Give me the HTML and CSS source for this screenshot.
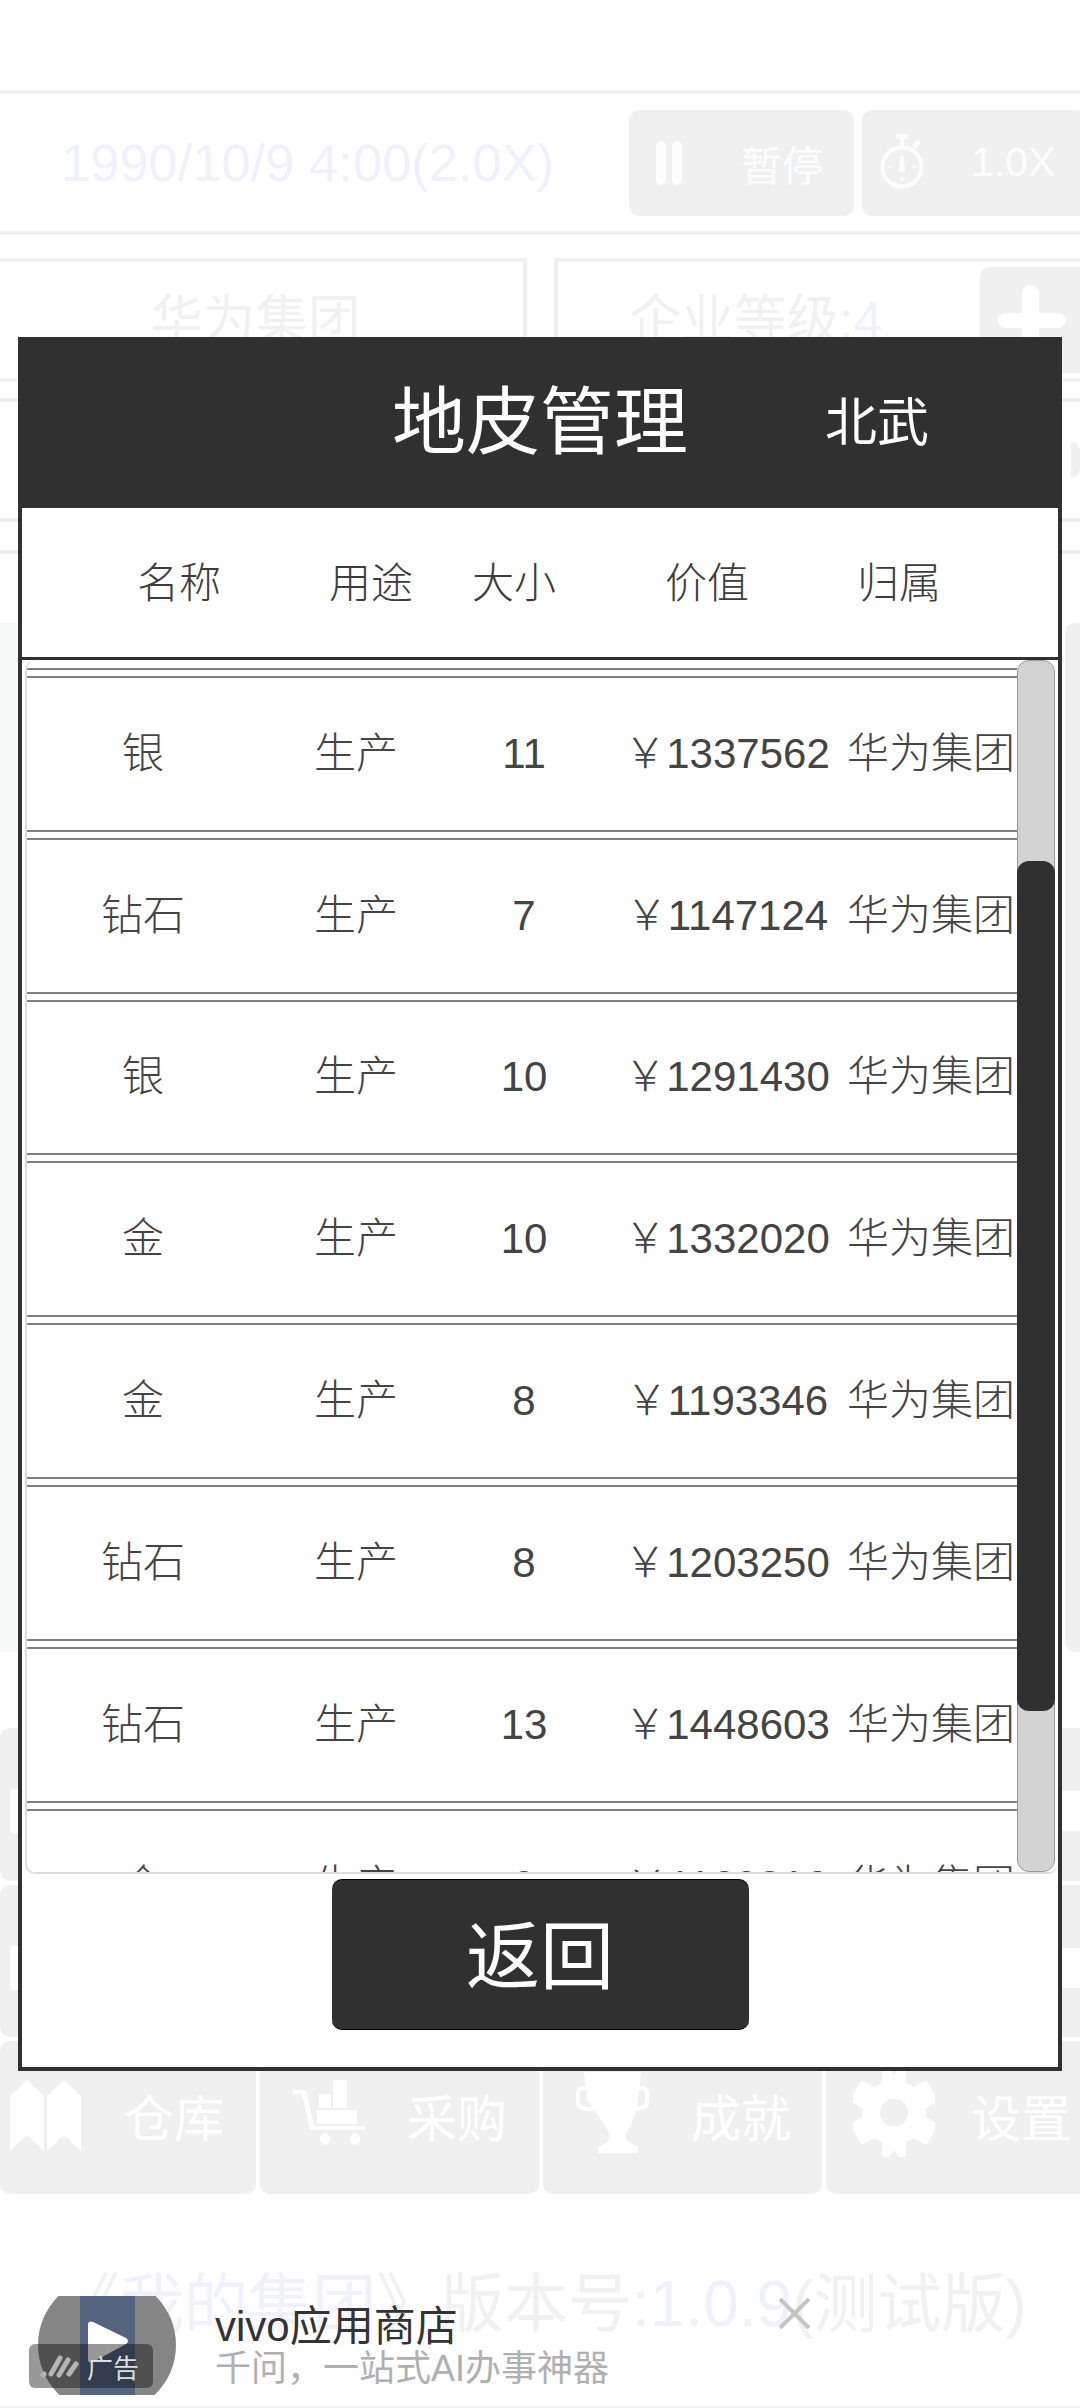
FILE: index.html
```html
<!DOCTYPE html>
<html lang="zh-CN">
<head>
    <meta charset="UTF-8">
    <meta name="viewport" content="width=device-width, initial-scale=1.0">
    <title>地皮管理</title>
    <link rel="stylesheet" href="styles.css">
</head>
<body>
    <!-- Faded game screen behind the dialog -->
    <div class="game">
        <div class="top-gap"></div>
        <div class="status-bar">
            <div class="game-time">1990/10/9 4:00(2.0X)</div>
            <div class="ctrl-btn">
                <svg class="pause-icon" viewBox="0 0 26 44"><rect width="10" height="44" rx="5"/><rect x="16" width="10" height="44" rx="5"/></svg>
                <span>暂停</span>
            </div>
            <div class="ctrl-btn">
                <svg class="watch-icon" viewBox="0 0 42 55"><rect x="15" width="12" height="5" rx="1"/><rect x="19" y="4" width="4" height="8"/><rect x="33" y="6" width="5" height="8" rx="1" transform="rotate(38 35 10)"/><circle cx="21" cy="33" r="19.500" fill="none" stroke="#fdfdfd" stroke-width="4"/><path d="M19.500 22h3l1.500 13a3 3 0 1 1-6 0z"/><circle cx="21" cy="45" r="2"/><circle cx="9" cy="33" r="1.500"/><circle cx="33" cy="33" r="1.500"/></svg>
                <span>1.0X</span>
            </div>
        </div>
        <div class="company-row">
            <div class="company-card first">华为集团</div>
            <div class="company-card second">
                <span class="level">企业等级:<em>4</em></span>
                <div class="plus-btn"><svg class="plus-icon" viewBox="0 0 69 70"><path d="M25 8a8 8 0 0 1 17 0v20h19a7.500 7.500 0 0 1 0 15H42v19a8 8 0 0 1-17 0V43H8a7.500 7.500 0 0 1 0-15h17z"/></svg></div>
            </div>
        </div>
        <div class="info-row"><span class="info-dot"></span></div>
        <div class="thin-line"></div>
        <div class="panels">
            <div class="panel-left"></div>
            <div class="panel-right"></div>
        </div>
        <div class="nav">
            <div class="nav-row">
                <div class="nav-tile"><span class="tile-mark"></span></div>
                <div class="nav-tile"></div>
                <div class="nav-tile"></div>
                <div class="nav-tile"><span class="tile-end"></span></div>
            </div>
            <div class="nav-row">
                <div class="nav-tile"><span class="tile-mark"></span></div>
                <div class="nav-tile"></div>
                <div class="nav-tile"></div>
                <div class="nav-tile"><span class="tile-end"></span></div>
            </div>
            <div class="nav-row">
                <div class="nav-tile">
                    <svg class="nav-icon map" viewBox="0 0 71 71"><path d="M0 16 L17 0 L34 16 V71 L17 55 L0 71z"/><path d="M37 16 L54 0 L71 16 V71 L54 55 L37 71z"/></svg>
                    <span>仓库</span>
                </div>
                <div class="nav-tile">
                    <svg class="nav-icon cart" viewBox="0 0 72 65"><path d="M0 10h10q3 0 4 3l7 33h51v4H17L9 14H0z"/><rect x="26" y="14" width="12" height="14"/><rect x="40" y="0" width="14" height="28"/><rect x="24" y="30" width="40" height="14"/><ellipse cx="32" cy="59" rx="5" ry="6"/><ellipse cx="62" cy="59" rx="5" ry="6"/></svg>
                    <span>采购</span>
                </div>
                <div class="nav-tile">
                    <svg class="nav-icon trophy" viewBox="0 0 73 81"><path d="M8 0h57l-3 28q-1 14-12 34q-3 7 12 13v6H22v-6q15-6 12-13Q22 42 11 28z"/><path d="M11 14H6q-6 0-6 8v8q0 9 14 9h3v-4h-3q-10 0-10-6v-7q0-4 3-4h5zM62 14h5q6 0 6 8v8q0 9-14 9h-3v-4h3q10 0 10-6v-7q0-4-3-4h-5z"/></svg>
                    <span>成就</span>
                </div>
                <div class="nav-tile">
                    <svg class="nav-icon gear" viewBox="0 0 82 89"><circle cx="41" cy="44.500" r="32"/><rect x="29" y="0" width="24" height="89" rx="3"/><rect x="29" y="0" width="24" height="89" rx="3" transform="rotate(60 41 44.500)"/><rect x="29" y="0" width="24" height="89" rx="3" transform="rotate(120 41 44.500)"/><g class="gear-cut"><circle cx="41" cy="44.500" r="14"/><path d="M36 0 L41 7 L46 0z"/><path d="M36 89 L41 82 L46 89z"/></g></svg>
                    <span>设置</span>
                </div>
            </div>
        </div>
        <div class="version"><span class="gray">《</span>我的集团<span class="gray">》版本号:</span>1.0.9<span class="gray">(测试版)</span></div>
    </div>

    <!-- Land dialog -->
    <div class="dialog">
        <div class="dialog-head">
            <h1 class="dialog-title">地皮管理</h1>
            <span class="dialog-city">北武</span>
        </div>
        <div class="land-head">
            <span>名称</span>
            <span>用途</span>
            <span>大小</span>
            <span>价值</span>
            <span>归属</span>
        </div>
        <div class="land-list">
            <div class="land-items">
                <div class="land-row scrolled"></div>
                <div class="land-row"><span>银</span><span>生产</span><span>11</span><span>￥1337562</span><span>华为集团</span></div>
                <div class="land-row"><span>钻石</span><span>生产</span><span>7</span><span>￥1147124</span><span>华为集团</span></div>
                <div class="land-row"><span>银</span><span>生产</span><span>10</span><span>￥1291430</span><span>华为集团</span></div>
                <div class="land-row"><span>金</span><span>生产</span><span>10</span><span>￥1332020</span><span>华为集团</span></div>
                <div class="land-row"><span>金</span><span>生产</span><span>8</span><span>￥1193346</span><span>华为集团</span></div>
                <div class="land-row"><span>钻石</span><span>生产</span><span>8</span><span>￥1203250</span><span>华为集团</span></div>
                <div class="land-row"><span>钻石</span><span>生产</span><span>13</span><span>￥1448603</span><span>华为集团</span></div>
                <div class="land-row"><span>金</span><span>生产</span><span>9</span><span>￥1160816</span><span>华为集团</span></div>
            </div>
            <div class="scroll-track"><div class="scroll-thumb"></div></div>
        </div>
        <div class="dialog-foot">
            <button class="back-btn">返回</button>
        </div>
    </div>

    <!-- Ad strip over the footer -->
    <div class="ad">
        <div class="ad-thumb">
            <div class="ad-circle"><div class="ad-band"></div></div>
            <svg class="ad-play" viewBox="0 0 41 42"><path d="M0 4q0-5 5-3l33 16q4 3 0 6L5 41q-5 2-5-3z"/></svg>
            <div class="ad-badge">
                <svg class="ad-logo" viewBox="0 0 40 24"><g stroke-linecap="round"><line x1="3" y1="21" x2="4" y2="20" stroke-width="5"/><line x1="11" y1="20" x2="20" y2="4" stroke-width="5"/><line x1="19" y1="21" x2="28" y2="6" stroke-width="5"/><line x1="29" y1="20" x2="36" y2="10" stroke-width="5"/></g></svg>
                <span>广告</span>
            </div>
        </div>
        <div class="ad-text">
            <div class="ad-name">vivo应用商店</div>
            <div class="ad-desc">千问，一站式AI办事神器</div>
        </div>
        <svg class="ad-close" viewBox="0 0 33 31"><path d="M2 1l29 29M31 1L2 30"/></svg>
    </div>
</body>
</html>
```

FILE: styles.css
```css
:root {
    --dark: #303030;
    --faint: #f0f0f0;
    --faint-text: #f1f1f1;
    --faint-blue: #f1f1fb;
    --row-line: #808080;
}

* {
    box-sizing: border-box;
    margin: 0;
    padding: 0;
}

body {
    position: relative;
    width: 1080px;
    height: 2408px;
    overflow: hidden;
    background-color: #fff;
    color: #333;
    font-family: "Liberation Sans", "Noto Sans CJK SC", sans-serif;
}

/* background screen */
.game {
    width: 1080px;
    height: 2408px;
    overflow: hidden;
}

.top-gap {
    height: 94px;
    border-bottom: 4px solid var(--faint);
}

.status-bar {
    display: flex;
    align-items: center;
    height: 141px;
    padding-left: 61px;
    border-bottom: 4px solid var(--faint);
}

.game-time {
    width: 568px;
    flex-shrink: 0;
    font-size: 52.500px;
    color: var(--faint-blue);
}

.ctrl-btn {
    display: flex;
    align-items: center;
    flex-shrink: 0;
    width: 225px;
    height: 106px;
    margin-right: 8px;
    border-radius: 10px;
    background-color: var(--faint);
    color: #fdfdfd;
    font-size: 41px;
}

.pause-icon {
    width: 26px;
    height: 44px;
    margin: 0 59px 0 27px;
    fill: #fdfdfd;
}

.watch-icon {
    width: 42px;
    height: 55px;
    margin: -2px 48px 0 19px;
    fill: #fdfdfd;
}

.company-row {
    display: flex;
    gap: 27px;
    height: 124px;
    margin-top: 23px;
    color: var(--faint-text);
    font-size: 52.500px;
}

.company-card {
    display: flex;
    align-items: center;
    border: 4px solid var(--faint);
}

.company-card.first {
    justify-content: center;
    width: 527px;
    padding-right: 12px;
    padding-bottom: 10px;
    border-left: none;
}

.company-card.second {
    flex: 1;
    padding-left: 71px;
    border-right: none;
}

.level {
    padding-bottom: 10px;
}

.level em {
    font-style: normal;
    color: var(--faint-blue);
}

.plus-btn {
    display: flex;
    align-items: center;
    width: 120px;
    height: 106px;
    margin-left: auto;
    margin-right: -20px;
    padding-left: 17px;
    border-radius: 10px;
    background-color: var(--faint);
}

.plus-icon {
    width: 69px;
    height: 70px;
    fill: #fff;
}

.info-row {
    display: flex;
    justify-content: flex-end;
    align-items: center;
    height: 124px;
    margin-top: 16px;
    border-top: 4px solid var(--faint);
    border-bottom: 4px solid var(--faint);
}

.info-dot {
    width: 9px;
    height: 36px;
    border-radius: 0 18px 18px 0;
    background-color: var(--faint);
}

.thin-line {
    height: 4px;
    margin-top: 28px;
    background-color: var(--faint);
}

.panels {
    display: flex;
    gap: 4px;
    height: 1029px;
    margin-top: 69px;
}

.panel-left {
    width: 1061px;
    background-color: #f8f9f9;
}

.panel-right {
    flex: 1;
    border-radius: 10px 0 0 10px;
    background-color: var(--faint);
}

.nav {
    display: flex;
    flex-direction: column;
    gap: 4px;
    margin-top: 76px;
}

.nav-row {
    display: flex;
    gap: 4px;
    height: 152.500px;
}

.nav-tile {
    position: relative;
    display: flex;
    align-items: center;
    flex-shrink: 0;
    width: 279px;
    height: 100%;
    border-radius: 10px;
    background-color: var(--faint);
    color: #fff;
    font-size: 50px;
}

.nav-tile:first-child {
    width: 256px;
}

.tile-mark {
    width: 8px;
    height: 44px;
    margin-left: 10px;
    margin-top: 14px;
    border-radius: 4px 0 0 4px;
    background-color: #fff;
}

.tile-end {
    width: 18px;
    height: 40px;
    margin-left: 236px;
    margin-top: 14px;
    background-color: #fff;
}

.nav-icon {
    flex-shrink: 0;
    fill: #fff;
}

.gear-cut {
    fill: var(--faint);
}

.nav-icon.map {
    width: 71px;
    height: 71px;
    margin: -4px 43px 0 10px;
}

.nav-icon.cart {
    width: 72px;
    height: 65px;
    margin: -10px 42px 0 33px;
}

.nav-icon.trophy {
    width: 73px;
    height: 81px;
    margin: -10px 42px 0 33px;
}

.nav-icon.gear {
    width: 82px;
    height: 89px;
    margin: -10px 36px 0 27px;
}

.nav-row:last-child .nav-tile span {
    margin-top: -5px;
}

.version {
    margin-top: 74px;
    padding-left: 56px;
    white-space: nowrap;
    font-size: 64px;
    line-height: 72px;
    color: var(--faint-blue);
}

.version .gray {
    color: var(--faint-text);
}

/* dialog */
.dialog {
    position: absolute;
    top: 337px;
    left: 18px;
    display: flex;
    flex-direction: column;
    width: 1044px;
    height: 1734px;
    border: 4px solid var(--dark);
    background-color: #fff;
}

.dialog-head {
    display: flex;
    align-items: center;
    flex-shrink: 0;
    height: 167px;
    padding-left: 370px;
    padding-bottom: 12px;
    background-color: var(--dark);
    color: #fff;
}

.dialog-title {
    width: 433px;
    padding-bottom: 6px;
    font-size: 74px;
    font-weight: 400;
}

.dialog-city {
    font-size: 52px;
}

.land-head {
    display: grid;
    grid-template-columns: 192px 192px 94px 292px 92px;
    align-items: center;
    flex-shrink: 0;
    height: 152px;
    padding-left: 61px;
    padding-bottom: 6px;
    border-bottom: 3px solid var(--dark);
    font-size: 42px;
    font-weight: 300;
    color: #3c3c3c;
    text-align: center;
}

.land-list {
    position: relative;
    height: 1214px;
    margin-left: 3px;
    overflow: hidden;
    border-left: 2px solid #ddd;
    border-bottom: 2px solid #ddd;
    border-radius: 10px 0 10px 10px;
}

.land-items {
    width: 990px;
    overflow: hidden;
}

.land-row {
    display: grid;
    grid-template-columns: 232px 194px 142px 264px 144px;
    align-items: center;
    height: 155.800px;
    margin-bottom: 6px;
    border-top: 2px solid var(--row-line);
    border-bottom: 2px solid var(--row-line);
    font-size: 42px;
    font-weight: 300;
    line-height: 60px;
    color: #444;
    white-space: nowrap;
}

.land-row span {
    justify-self: center;
}

.land-row.scrolled {
    height: 10px;
    border-top: none;
}

.scroll-track {
    position: absolute;
    top: 0;
    right: 3px;
    width: 38px;
    height: 100%;
    padding-top: 200px;
    border: 1px solid #999;
    border-radius: 12px;
    background-color: #d3d3d3;
}

.scroll-thumb {
    width: 38px;
    height: 850px;
    margin-left: -1px;
    border-radius: 12px;
    background-color: var(--dark);
}

.dialog-foot {
    display: flex;
    justify-content: center;
    padding-top: 5px;
}

.back-btn {
    width: 417px;
    height: 151px;
    padding-bottom: 8px;
    border: none;
    border-top: 1px solid #000;
    border-bottom: 1px solid #000;
    border-radius: 10px;
    background-color: var(--dark);
    color: #fff;
    font-family: inherit;
    font-size: 74px;
}

/* ad */
.ad {
    position: absolute;
    left: 0;
    bottom: 0;
    display: flex;
    align-items: flex-start;
    width: 1080px;
    height: 112px;
    border-bottom: 2px solid #f2f2f2;
}

.ad-thumb {
    position: relative;
    width: 177px;
    height: 99px;
    margin-left: 19px;
    overflow: hidden;
    flex-shrink: 0;
}

.ad-circle {
    position: absolute;
    top: -20px;
    left: 19px;
    width: 138px;
    height: 138px;
    overflow: hidden;
    border-radius: 50%;
    background-color: #858585;
}

.ad-band {
    width: 55px;
    height: 100%;
    margin-left: 42px;
    background-color: #54647f;
}

.ad-play {
    position: absolute;
    top: 25px;
    left: 69px;
    width: 41px;
    height: 42px;
    fill: #fff;
}

.ad-badge {
    position: absolute;
    top: 48px;
    left: 10px;
    display: flex;
    align-items: center;
    width: 124px;
    height: 44px;
    padding-left: 11px;
    border-radius: 6px;
    background-color: rgba(0, 0, 0, 0.4);
    color: #ddd;
    font-size: 26px;
}

.ad-logo {
    width: 40px;
    height: 24px;
    margin-right: 7px;
    stroke: #b5b5b5;
}

.ad-text {
    margin-left: 19px;
    padding-top: 7px;
}

.ad-name {
    font-size: 42px;
    line-height: 48px;
    color: #333;
}

.ad-desc {
    margin-top: -3px;
    font-size: 36px;
    line-height: 42px;
    color: #b0b0b0;
}

.ad-close {
    width: 33px;
    height: 31px;
    margin: 2px 0 0 169px;
    fill: none;
    stroke: #c4c4c4;
    stroke-width: 4;
}
```
